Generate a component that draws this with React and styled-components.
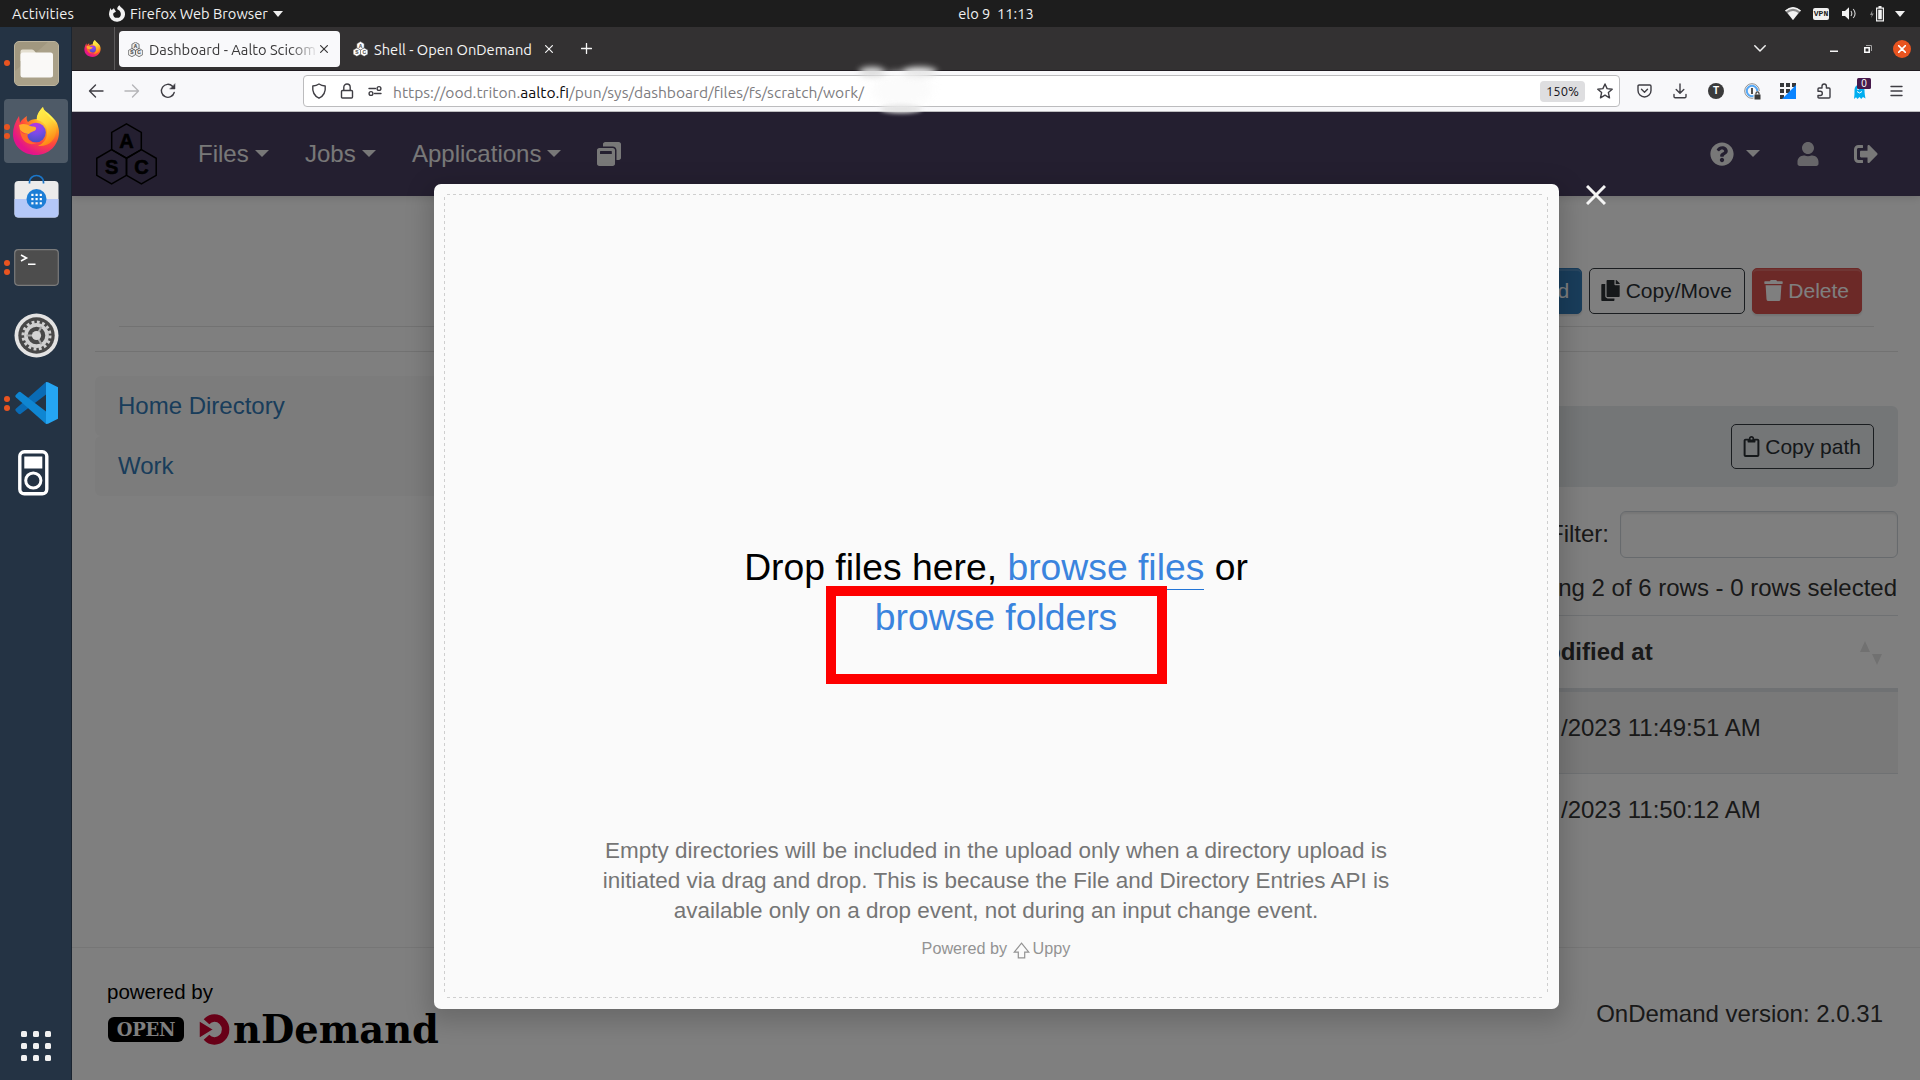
import React from 'react';
import styled, { createGlobalStyle, css } from 'styled-components';
import {
  FaWindowRestore, FaQuestionCircle, FaUser, FaSignOutAlt, FaCopy, FaTrash, FaRegClipboard,
} from 'react-icons/fa';

const GlobalStyle = createGlobalStyle`
  *, *::before, *::after { box-sizing: border-box; }
  html, body { margin: 0; padding: 0; }
  body { width: 1920px; height: 1080px; overflow: hidden; background: #808080; }
  svg { display: block; flex: none; }
`;

const ui = '"Ubuntu", "Noto Sans", sans-serif';
const sans = '"Liberation Sans", Arial, sans-serif';

/* ---------- desktop shell ---------- */

const Screen = styled.div`
  width: 1920px;
  height: 1080px;
  display: flex;
  flex-direction: column;
  overflow: hidden;
  font-family: ${ui};
`;

const TopBar = styled.header`
  height: 27px;
  flex: none;
  display: grid;
  grid-template-columns: 1fr auto 1fr;
  align-items: center;
  padding-left: 72px;
  background: #1d1d1d;
  color: #f0f0f0;
  font-size: 14.67px;
  line-height: 26px;
  white-space: pre;
`;

const TopLeft = styled.div`
  display: flex;
  align-items: center;
  margin-left: -72px;
  padding-left: 12px;
`;

const Activities = styled.span`
  width: 97px;
  letter-spacing: 0.2px;
`;

const AppMenu = styled.span`
  display: flex;
  align-items: center;
  gap: 5px;
`;

const TopRight = styled.div`
  display: flex;
  justify-content: flex-end;
  align-items: center;
  padding-right: 11px;
`;

const Slot = styled.span`
  width: ${(p) => p.$w}px;
  flex: none;
  display: flex;
  align-items: center;
  justify-content: center;
  margin-right: ${(p) => p.$mr || 0}px;
`;

const VpnBadge = styled.span`
  width: 16px;
  height: 12px;
  border-radius: 2px;
  background: #f0f0f0;
  color: #1d1d1d;
  font: bold 8px/12px "Liberation Mono", monospace;
  letter-spacing: 0;
  text-align: center;
`;

const Body = styled.div`
  flex: 1;
  display: flex;
  min-height: 0;
`;

const Dock = styled.nav`
  width: 72px;
  flex: none;
  display: flex;
  flex-direction: column;
  gap: 4px;
  padding: 4px 4px 0;
  background: #243344;
  border-right: 1px solid #1a2430;
`;

const DockItem = styled.div`
  height: 64px;
  width: 64px;
  flex: none;
  display: flex;
  align-items: center;
  border-radius: 4px;
  background: ${(p) => (p.$active ? '#4e5a67' : 'transparent')};
`;

const Dots = styled.div`
  width: 6px;
  margin-right: 3px;
  flex: none;
  display: flex;
  flex-direction: column;
  gap: 3px;
`;

const Dot = styled.i`
  width: 6px;
  height: 6px;
  border-radius: 3px;
  background: #e95420;
`;

const DockArt = styled.div`
  width: 46px;
  height: 48px;
  display: flex;
  align-items: center;
  justify-content: center;
`;

const AppGrid = styled.div`
  margin: auto 0 19px 17px;
  display: grid;
  grid-template-columns: repeat(3, 6px);
  gap: 6px;
`;

const GridDot = styled.i`
  height: 6px;
  border-radius: 1.5px;
  background: #f2f2f2;
`;

/* ---------- browser chrome ---------- */

const Browser = styled.main`
  flex: 1;
  min-width: 0;
  display: flex;
  flex-direction: column;
  position: relative;
`;

const TabStrip = styled.div`
  height: 44px;
  flex: none;
  display: flex;
  background: #333132;
  border-bottom: 1px solid #1f1b20;
`;

const PinnedTab = styled.div`
  width: 43px;
  padding: 13px 0 0 12px;
  border-right: 1px solid #5c5a5b;
`;

const Tab = styled.div`
  width: 221px;
  height: 36px;
  flex: none;
  display: flex;
  align-items: center;
  margin: 4px 0 0 4px;
  padding: 0 12px 0 9px;
  border-radius: 4px;
  font-size: 14.67px;
  line-height: 36px;
  white-space: nowrap;
  ${(p) => (p.$active
    ? css`background: #f9f9fb; color: #3a393a;`
    : css`background: transparent; color: #f5f5f5;`)}
`;

const TabTitle = styled.span`
  flex: 1;
  margin: 1px 4px 0 6px;
  overflow: hidden;
  ${(p) => p.$fade && 'mask-image: linear-gradient(90deg, #000 84%, rgba(0,0,0,.1) 100%);'}
`;

const NewTab = styled.div`
  display: flex;
  align-items: center;
  margin-left: 16px;
  padding-bottom: 1px;
`;

const WindowControls = styled.div`
  margin-left: auto;
  display: flex;
  align-items: center;
  padding: 0 1px 0 0;
`;

const CloseButton = styled.span`
  width: 18px;
  height: 18px;
  border-radius: 9px;
  background: #e95420;
  display: flex;
  align-items: center;
  justify-content: center;
`;

const Toolbar = styled.div`
  height: 41px;
  flex: none;
  display: flex;
  align-items: center;
  background: #f8f8fa;
  border-bottom: 1px solid #bdbdbf;
`;

const NavButtons = styled.div`
  width: 231px;
  padding-left: 16px;
  display: flex;
  gap: 20px;
`;

const UrlBar = styled.div`
  width: 1317px;
  height: 32px;
  display: flex;
  align-items: center;
  padding-left: 7px;
  border: 1px solid #bcbcbe;
  border-radius: 4px;
  background: #fff;
`;

const UrlIcons = styled.div`
  display: flex;
  gap: 12px;
  width: 82px;
`;

const Url = styled.span`
  padding-top: 1px;
  font-size: 15.6px;
  line-height: 20px;
  color: #7d7c80;
  white-space: nowrap;
  b { font-weight: 400; color: #0c0c0d; }
`;

const ZoomBadge = styled.span`
  margin-left: auto;
  width: 45px;
  height: 21px;
  border-radius: 4px;
  background: #dedee0;
  color: #15141a;
  font-size: 13px;
  line-height: 21px;
  text-align: center;
`;

const StarSlot = styled.span`
  margin: 0 6px 0 12px;
`;

const Extensions = styled.div`
  display: flex;
  margin-left: 6px;
`;

const ExtT = styled.span`
  width: 16px;
  height: 16px;
  border-radius: 8px;
  background: #3b3b3b;
  color: #fff;
  font: bold 10px/16px ${sans};
  text-align: center;
`;

const GhostWrap = styled.span`
  position: relative;
  width: 14px;
  height: 16px;
`;

const GhostBadge = styled.span`
  position: absolute;
  left: 4px;
  top: -5px;
  width: 14px;
  height: 11px;
  border-radius: 1.5px;
  background: #471a4c;
  color: #fff;
  font: 10px/11px ${sans};
  text-align: center;
`;

const Smudge = styled.i`
  position: absolute;
  left: ${(p) => p.$x}px;
  top: ${(p) => p.$y}px;
  width: ${(p) => p.$w}px;
  height: ${(p) => p.$h}px;
  border-radius: 50%;
  background: ${(p) => p.$c || '#fbfbfb'};
  filter: blur(${(p) => p.$b || 3}px);
`;

/* ---------- OnDemand page ---------- */

const Viewport = styled.section`
  flex: 1;
  min-height: 0;
  position: relative;
  display: flex;
  flex-direction: column;
  overflow: hidden;
  background: #fff;
  color: #333;
  font: 24px/36px ${sans};
`;

const Navbar = styled.div`
  height: 84px;
  flex: none;
  display: flex;
  align-items: center;
  padding: 0 0 1px 24px;
  background: #483e60;
  box-shadow: 0 1px 9px rgba(0, 0, 0, 0.16);
  color: #f0f0f0;
`;

const NavLogo = styled.div`
  width: 102px;
`;

const NavItem = styled.div`
  display: flex;
  align-items: center;
  width: ${(p) => p.$w}px;
`;

const Caret = styled.i`
  width: 0;
  margin-left: 6px;
  border: 7px solid transparent;
  border-top-color: currentColor;
  border-bottom: 0;
`;

const NavRight = styled.div`
  margin-left: auto;
  display: flex;
  align-items: center;
  padding-right: 42px;
`;

const Content = styled.div`
  flex: 1;
  padding: 0 22px 0 23px;
`;

const ActionBar = styled.div`
  height: 131px;
  margin: 0 24px;
  padding: 72px 12px 0 0;
  display: flex;
  justify-content: flex-end;
  align-items: flex-start;
  gap: 7px;
  border-bottom: 1px solid #e5e5e5;
`;

const Button = styled.span`
  height: ${(p) => p.$h || 46}px;
  display: flex;
  align-items: center;
  gap: 6px;
  padding: 0 12px 1px 11px;
  border: 1px solid #343a40;
  border-radius: 5px;
  font-size: 21px;
  line-height: 31px;
  white-space: nowrap;
  color: #2b3035;
  svg { margin: 0 -${(p) => p.$trim || 0}px; }
  ${(p) => p.$fill && css`
    border-color: ${p.$fill};
    background: ${p.$fill};
    color: #fff;
    box-shadow: inset 0 2px 0 rgba(255, 255, 255, 0.15), 0 2px 2px rgba(0, 0, 0, 0.1);
  `}
`;

const Rule = styled.div`
  margin-top: 24px;
  height: 1px;
  background: #e5e5e5;
`;

const Columns = styled.div`
  display: grid;
  grid-template-columns: 428px 1fr;
  gap: 45px;
  padding-top: 24px;
`;

const Places = styled.div`
  display: flex;
  flex-direction: column;
`;

const Place = styled.a`
  height: 60px;
  padding: 12px 23px;
  border-radius: 6px;
  background: #f8f8f8;
  color: #337ab7;
`;

const Listing = styled.div`
  padding-top: 30px;
`;

const PathBar = styled.div`
  height: 81px;
  display: flex;
  justify-content: flex-end;
  align-items: center;
  padding-right: 24px;
  border-radius: 6px;
  background: #e9ecef;
`;

const FilterRow = styled.div`
  display: flex;
  justify-content: flex-end;
  align-items: center;
  gap: 11px;
  margin-top: 24px;
`;

const FilterLabel = styled.label`
  padding-bottom: 2px;
`;

const FilterBox = styled.span`
  width: 278px;
  height: 47px;
  border: 1px solid #ced4da;
  border-radius: 6px;
  box-shadow: inset 0 2px 2px rgba(0, 0, 0, 0.075);
`;

const Status = styled.div`
  margin-top: 12px;
  height: 45px;
  padding-right: 1px;
  text-align: right;
`;

const Cells = styled.div`
  display: flex;
  padding: 18px 15px 0 0;
  height: ${(p) => (p.$head ? 77 : 81)}px;
  border-top: 1px solid #dee2e6;
  background: ${(p) => (p.$striped ? '#f2f2f2' : 'transparent')};
  ${(p) => p.$head && 'font-weight: 700; border-bottom: 4px solid #dee2e6;'}
  ${(p) => p.$striped && 'border-top: 0; padding-top: 18px;'}
`;

const Cell = styled.span`
  width: 357px;
  margin-left: auto;
  display: flex;
  padding-left: ${(p) => p.$pad}px;
`;

const SortIcon = styled.svg`
  margin: 7px 0 0 auto;
`;

const Footer = styled.footer`
  height: 133px;
  flex: none;
  display: flex;
  justify-content: space-between;
  padding: 32px 37px 0 35px;
  border-top: 1px solid #ededed;
`;

const Brand = styled.div`
  color: #000;
  font-size: 20.5px;
  line-height: 24px;
`;

const BrandRow = styled.div`
  display: flex;
  align-items: center;
  height: 32px;
  margin: 9px 0 0 1px;
`;

const OpenBadge = styled.span`
  width: 76px;
  height: 25px;
  margin-right: 15px;
  border-radius: 6px;
  background: #000;
  color: #fff;
  font: bold 18px/25px "DejaVu Serif", serif;
  letter-spacing: -0.2px;
  text-align: center;
`;

const BrandName = styled.span`
  margin: 1px 0 0 2px;
  font: bold 38.4px/32px "DejaVu Serif", serif;
`;

const Version = styled.div`
  margin-top: 16px;
`;

/* ---------- upload dialog ---------- */

const Backdrop = styled.div`
  position: absolute;
  inset: 0;
  background: rgba(0, 0, 0, 0.5);
`;

const Dialog = styled.div`
  position: absolute;
  left: 362px;
  top: 72px;
  width: 1125px;
  height: 825px;
  padding: 10px 11px 11px 10px;
  border-radius: 7px;
  background: #fafafa;
  box-shadow: 0 7px 23px 6px rgba(0, 0, 0, 0.17);
`;

const dash = (deg) => `repeating-linear-gradient(${deg}deg, #cfcfcf 0 3px, transparent 3px 6px)`;

const DropZone = styled.div`
  height: 100%;
  display: flex;
  flex-direction: column;
  align-items: center;
  padding-top: 348px;
  background:
    ${dash(90)} 3px 0 / calc(100% - 6px) 1px no-repeat,
    ${dash(90)} 3px 100% / calc(100% - 6px) 1px no-repeat,
    ${dash(180)} 0 3px / 1px calc(100% - 6px) no-repeat,
    ${dash(180)} 100% 3px / 1px calc(100% - 6px) no-repeat;
  text-align: center;
`;

const DropTitle = styled.div`
  width: 560px;
  color: #000;
  font-size: 37.3px;
  line-height: 50px;
`;

const Browse = styled.a`
  color: #3a84de;
  ${(p) => p.$underlined && 'display: inline-block; height: 48px; border-bottom: 1px solid #2275d7;'}
`;

const Note = styled.p`
  width: 800px;
  margin: 194px 0 0;
  color: #757575;
  font-size: 22.47px;
  line-height: 30px;
`;

const Powered = styled.div`
  display: flex;
  align-items: center;
  margin-top: 12px;
  color: #939393;
  font-size: 16.2px;
  line-height: 21px;
  white-space: pre;
`;

const UppyArrow = styled.svg`
  margin: 3px 3px 0 1px;
`;

const DialogClose = styled.div`
  position: absolute;
  left: 1514px;
  top: 73px;
`;

const Highlight = styled.div`
  position: absolute;
  left: 754px;
  top: 474px;
  width: 341px;
  height: 98px;
  border: 10px solid #fe0000;
`;

/* ---------- drawings ---------- */

const FirefoxLogo = ({ w = 46, h = 48, id }) => (
  <svg width={w} height={h} viewBox="0 0 46 48">
    <defs>
      <radialGradient id={`${id}a`} cx="0.8" cy="0.14" r="1">
        <stop offset="0.1" stopColor="#fff44f" />
        <stop offset="0.38" stopColor="#ff9a1c" />
        <stop offset="0.62" stopColor="#ff4a3a" />
        <stop offset="0.9" stopColor="#e3148a" />
      </radialGradient>
      <radialGradient id={`${id}b`} cx="0.5" cy="0.1" r="0.9">
        <stop offset="0" stopColor="#b833e1" />
        <stop offset="0.5" stopColor="#7a4be8" />
        <stop offset="1" stopColor="#4a4fc4" />
      </radialGradient>
      <linearGradient id={`${id}c`} x1="0" y1="0" x2="0.3" y2="1">
        <stop offset="0" stopColor="#fff44f" />
        <stop offset="0.5" stopColor="#ffd93a" />
        <stop offset="1" stopColor="#ff8a16" />
      </linearGradient>
    </defs>
    <path d="M44 16C42 12 38 9 35 6C32 4 30 2 30 0C26 4 24 8 24 12C20 12 17 13 15 15C14 14 13 12 14 9C11 11 8 13 7 16L6 9C2 15 0 21 0 27C0 39 10 48 23 48C36 48 46 38 46 25C46 22 45 19 44 16Z" fill={`url(#${id}a)`} />
    <path d="M30 0C26 4 23 9 24 13C30 14 35 19 34 26C34 32 30 37 25 39C36 40 44 32 43 22C43 12 31 8 30 0Z" fill={`url(#${id}c)`} />
    <circle cx="23" cy="25.5" r="9.8" fill={`url(#${id}b)`} />
    <path d="M6 18C10 16 14 17 17 19C20 20 24 19 23 22C22 25 18 24 16 27C14 27 10 26 7 23Z" fill="#ffab2b" />
    <path d="M7 22C8 27 12 27 15 27C13 31 17 36 24 36C15 40 7 33 7 22Z" fill="#ff6a2c" />
  </svg>
);

const hex = (cx, cy, r) => {
  const k = r * 0.866;
  return `M${cx} ${cy - r}L${cx + k} ${cy - r / 2}V${cy + r / 2}L${cx} ${cy + r}L${cx - k} ${cy + r / 2}V${cy - r / 2}Z`;
};

const AscLogo = ({ w, h, fill = 'none', stroke = '#000', sw = 1.5 }) => (
  <svg width={w} height={h} viewBox="0 0 61 62">
    {[[30.5, 18, 'A'], [15.6, 43.8, 'S'], [45.4, 43.8, 'C']].map(([x, y, t]) => (
      <g key={t}>
        <path d={hex(x, y, 17.1)} fill={fill} stroke={stroke} strokeWidth={sw} />
        <text x={x} y={y + 7.2} fontSize="20" fontWeight="700" fontFamily="Liberation Sans, Arial, sans-serif" textAnchor="middle" fill={stroke} stroke={stroke} strokeWidth="0.6">{t}</text>
      </g>
    ))}
  </svg>
);

const Line = ({ w, h = w, vb = `0 0 ${w} ${h}`, c = '#3f3e44', sw = 1.4, children }) => (
  <svg width={w} height={h} viewBox={vb} fill="none" stroke={c} strokeWidth={sw} strokeLinecap="round" strokeLinejoin="round">
    {children}
  </svg>
);

const Cross = ({ s = 8, c, sw = 1.2 }) => (
  <Line w={s} c={c} sw={sw}><path d={`M.6 .6L${s - 0.6} ${s - 0.6}M${s - 0.6} .6L.6 ${s - 0.6}`} /></Line>
);

const Triangle = () => (
  <svg width="10" height="6" viewBox="0 0 10 6"><path d="M0 0H10L5 6Z" fill="#f0f0f0" /></svg>
);

const FilesArt = () => (
  <svg width="45" height="45" viewBox="0 0 45 45">
    <rect x="0.5" y="0.5" width="44" height="44" rx="4.5" fill="#a0977f" stroke="#bdb59f" />
    <path d="M1 30L34 1H40Q44 1 44 5V40Q44 44 40 44H5Q1 44 1 40Z" fill="#aaa189" />
    <path d="M6.5 12V10.5Q6.5 8.5 8.5 8.5H18Q19.5 8.5 20.5 10L22 12V20H6.5Z" fill="#e4dfd0" />
    <rect x="6.5" y="11.5" width="32.5" height="25" rx="2.5" fill="#faf9f7" />
  </svg>
);

const RaisedSvg = styled.svg`
  margin-top: -6px;
`;

const SoftwareArt = () => (
  <RaisedSvg width="45" height="48" viewBox="0 0 45 48">
    <rect x="0.5" y="9" width="44" height="36.5" rx="4" fill="#ebebeb" />
    <path d="M.5 27H44.5V41.5Q44.5 45.5 40.5 45.5H4.5Q.5 45.5 .5 41.5Z" fill="#b4c8f8" />
    <path d="M15.5 11.5V10A7 6.5 0 0 1 29.5 10V11.5" fill="none" stroke="#1b76c8" strokeWidth="1.7" />
    <circle cx="22.5" cy="27" r="10" fill="#1c7ed6" />
    {[0, 1, 2].map((r) => [0, 1, 2].map((c) => (
      <rect key={`${r}${c}`} x={17.3 + c * 4.2} y={21.8 + r * 4.2} width="2.2" height="2.2" fill="#fff" />
    )))}
  </RaisedSvg>
);

const TerminalArt = () => (
  <svg width="45" height="37" viewBox="0 0 45 37">
    <rect x="0.7" y="0.7" width="43.6" height="35.6" rx="3.5" fill="#4d4d4d" stroke="#7b7b7b" strokeWidth="1.2" />
    <path d="M7 6L12.5 9L7 12M14 15.2H21.5" fill="none" stroke="#fff" strokeWidth="1.6" />
  </svg>
);

const SettingsArt = () => (
  <svg width="45" height="45" viewBox="0 0 45 45">
    <circle cx="22.5" cy="22.5" r="22" fill="#e3e3e3" />
    <circle cx="22.5" cy="22.5" r="18.2" fill="#484848" />
    <circle cx="22.5" cy="22.5" r="10.6" fill="none" stroke="#d0d0d0" strokeWidth="3.6" />
    <circle cx="22.5" cy="22.5" r="13.5" fill="none" stroke="#d0d0d0" strokeWidth="3" strokeDasharray="2.8 2.5" />
    <path d="M22.5 22.5L12.5 22.5M22.5 22.5L27.5 13.8M22.5 22.5L27.5 31.2" stroke="#a9a9a9" strokeWidth="2" />
    <circle cx="22.5" cy="22.5" r="4.6" fill="#d4d4d4" />
  </svg>
);

const CodeArt = () => (
  <svg width="43" height="42" viewBox="0 0 43 42">
    <path d="M31 0V12.5L5.5 32Q4.5 32.5 3.5 31.7L.8 29Q-.2 27.8 .8 26.7Z" fill="#0a6bb5" />
    <path d="M31 42V29.5L5.5 10Q4.5 9.5 3.5 10.3L.8 13Q-.2 14.2 .8 15.3Z" fill="#0f86d2" />
    <path d="M31 0L33 0.3L43 5.2V36.8L33 41.7L31 42Z" fill="#25a5f2" />
  </svg>
);

const PlayerSvg = styled.svg`
  margin: 3px 6px 0 0;
`;

const PlayerArt = () => (
  <PlayerSvg width="31" height="46" viewBox="0 0 31 46">
    <rect x="1.8" y="1.8" width="27" height="42" rx="4.5" fill="none" stroke="#fff" strokeWidth="3.4" />
    <rect x="6.3" y="6.5" width="18" height="12" fill="#fff" />
    <circle cx="15.3" cy="30.5" r="7.6" fill="none" stroke="#fff" strokeWidth="3" />
  </PlayerSvg>
);

const apps = [
  { id: 'files', dots: 1, art: <FilesArt /> },
  { id: 'firefox', dots: 2, active: true, art: <FirefoxLogo id="dock" /> },
  { id: 'software', dots: 0, art: <SoftwareArt /> },
  { id: 'terminal', dots: 2, art: <TerminalArt /> },
  { id: 'settings', dots: 0, art: <SettingsArt /> },
  { id: 'code', dots: 2, art: <CodeArt /> },
  { id: 'player', dots: 0, art: <PlayerArt /> },
];

/* ---------- sections ---------- */

const DesktopBar = () => (
  <TopBar>
    <TopLeft>
      <Activities>Activities</Activities>
      <AppMenu>
        <svg width="16" height="17" viewBox="0 0 46 48">
          <path d="M44 16C40 8 32 6 30 0C25 4 23 8 24 12C28 14 34 18 34 25A11 11 0 0 1 12 26C12 22 16 22 20 19L14 9L7 15L5 8C2 14 0 21 0 27A23 22 0 0 0 46 25Q46 20 44 16Z" fill="#f2f2f2" />
        </svg>
        Firefox Web Browser
        <Triangle />
      </AppMenu>
    </TopLeft>
    <span>elo 9  11:13</span>
    <TopRight>
      <Slot $w={28}>
        <svg width="16" height="13" viewBox="0 0 16 13">
          <path d="M0 3.5Q8 -3.5 16 3.5L8 13Z" fill="#8a8a8a" />
          <path d="M0 3.5Q8 -3.5 16 3.5L15 4.6Q8 -1 1 4.6Z" fill="#f2f2f2" />
          <path d="M2.6 6Q8 2 13.4 6L8 13Z" fill="#f2f2f2" />
        </svg>
      </Slot>
      <Slot $w={28}><VpnBadge>VPN</VpnBadge></Slot>
      <Slot $w={28}>
        <svg width="15" height="13" viewBox="0 0 15 13">
          <path d="M0 4H3L7 .3V12.7L3 9H0Z" fill="#f2f2f2" />
          <path d="M9 4Q10.6 6.5 9 9M11.2 2Q15 6.5 11.2 11" fill="none" stroke="#d0d0d0" strokeWidth="1.1" />
        </svg>
      </Slot>
      <Slot $w={28}>
        <svg width="16" height="16" viewBox="0 0 16 16">
          <path d="M3.5 4L1 9H2.8L2 12L4.8 7.5H3Z" fill="#8d8d8d" />
          <path d="M9.5 0H12.5V1.5H15V15.5H7V1.5H9.5Z" fill="#f2f2f2" />
          <path d="M8.2 2.7H13.8V14.3H8.2Z" fill="#1d1d1d" />
          <path d="M9.2 3.7H12.8V13.3H9.2Z" fill="#f2f2f2" />
        </svg>
      </Slot>
      <Slot $w={18}><Triangle /></Slot>
    </TopRight>
  </TopBar>
);

const Tabs = () => (
  <TabStrip>
    <PinnedTab><FirefoxLogo id="pin" w={17} h={17} /></PinnedTab>
    <Tab $active>
      <AscLogo w={15} h={15} fill="#ededed" stroke="#4c4c4c" sw={3} />
      <TabTitle $fade>Dashboard - Aalto Scicomp</TabTitle>
      <Cross c="#3a393a" />
    </Tab>
    <Tab>
      <AscLogo w={15} h={16} fill="#fff" stroke="#555" sw={2} />
      <TabTitle>Shell - Open OnDemand</TabTitle>
      <Cross c="#f5f5f5" />
    </Tab>
    <NewTab><Line w={11} c="#f5f5f5" sw={1.3}><path d="M5.5 .5V10.5M.5 5.5H10.5" /></Line></NewTab>
    <WindowControls>
      <Slot $w={34} $mr={40}><Line w={12} h={7} c="#f0f0f0" sw={1.5}><path d="M.8 .8L6 6L11.2 .8" /></Line></Slot>
      <Slot $w={34}><svg width="8" height="9" viewBox="0 0 8 9"><path d="M0 6.5H8V8H0Z" fill="#f5f5f5" /></svg></Slot>
      <Slot $w={34}>
        <svg width="8" height="8" viewBox="0 0 8 8" fill="none">
          <path d="M2 .5H7.5V6" stroke="#a3a2a2" />
          <path d="M.8 2.8H5.2V7.2H.8Z" stroke="#fff" strokeWidth="1.5" />
        </svg>
      </Slot>
      <Slot $w={34}><CloseButton><Cross c="#fff" sw={1.5} /></CloseButton></Slot>
    </WindowControls>
  </TabStrip>
);

const AddressBar = () => (
  <Toolbar>
    <NavButtons>
      <Line w={16}><path d="M15 8H1.5M7.5 2L1.5 8L7.5 14" /></Line>
      <Line w={16} c="#b5b5b8"><path d="M1 8H14.5M8.5 2L14.5 8L8.5 14" /></Line>
      <Line w={16}>
        <path d="M14.2 9.5A6.5 6.5 0 1 1 12.5 3.2" />
        <path d="M15 1V6H10Z" fill="#3f3e44" strokeWidth="0.5" />
      </Line>
    </NavButtons>
    <UrlBar>
      <UrlIcons>
        <Line w={16}><path d="M8 1C10 2.3 12 2.8 14.2 3C14.8 8.5 12.5 13 8 15.2C3.5 13 1.2 8.5 1.8 3C4 2.8 6 2.3 8 1Z" /></Line>
        <Line w={16}><path d="M3.5 7.5H12.5Q13.5 7.5 13.5 8.5V14Q13.5 15 12.5 15H3.5Q2.5 15 2.5 14V8.5Q2.5 7.5 3.5 7.5ZM4.8 7.5V4.2A3.2 3.2 0 0 1 11.2 4.2V7.5" /></Line>
        <Line w={16}><path d="M2 5.5H8.5M7.5 10.5H14" /><circle cx="12" cy="5.5" r="1.9" /><circle cx="4" cy="10.5" r="1.9" /></Line>
      </UrlIcons>
      <Url>https://ood.triton.<b>aalto.fi</b>/pun/sys/dashboard/files/fs/scratch/work/</Url>
      <ZoomBadge>150%</ZoomBadge>
      <StarSlot><Line w={16}><path d="M8 1L10.1 5.6L15.2 6.2L11.4 9.6L12.5 14.8L8 12.2L3.5 14.8L4.6 9.6L.8 6.2L5.9 5.6Z" /></Line></StarSlot>
    </UrlBar>
    <Extensions>
      <Slot $w={36}><Line w={15} h={14}><path d="M2.2 1H12.8Q14 1 14 2.2V6.5A6.5 6.5 0 0 1 1 6.5V2.2Q1 1 2.2 1ZM4.5 5.2L7.5 8.2L10.5 5.2" /></Line></Slot>
      <Slot $w={36}><Line w={14} h={16}><path d="M7 1V10M3.2 6.5L7 10.2L10.8 6.5M1 11.5V13.5Q1 14.7 2.2 14.7H11.8Q13 14.7 13 13.5V11.5" /></Line></Slot>
      <Slot $w={36}><ExtT>T</ExtT></Slot>
      <Slot $w={36}>
        <svg width="17" height="17" viewBox="0 0 17 17" fill="none">
          <circle cx="8" cy="8" r="7.3" stroke="#8f8f8f" strokeWidth="1" />
          <circle cx="8" cy="8" r="5.2" stroke="#56a8f5" strokeWidth="2" />
          <path d="M8 5V11" stroke="#3b3b3b" strokeWidth="1.8" />
          <rect x="9.5" y="8" width="7.5" height="9" fill="#f8f8fa" />
          <path d="M10.5 11.5H16.5V16.5H10.5Z" fill="#3b3b3b" />
          <path d="M12 11.5V10.3A1.5 1.5 0 0 1 15 10.3V11.5" stroke="#3b3b3b" strokeWidth="1.2" />
        </svg>
      </Slot>
      <Slot $w={36}>
        <svg width="16" height="16" viewBox="0 0 16 16">
          {[0, 6, 12].map((y) => [0, 6, 12].map((x) => (
            <rect key={`${x}-${y}`} x={x} y={y} width="4" height="4" fill="#36383b" />
          )))}
          <path d="M16 2V16H2Z" fill="#0a84ff" />
        </svg>
      </Slot>
      <Slot $w={36}>
        <Line w={15} h={16}><path d="M2 5H5V3.2A2.2 2.2 0 0 1 9.4 3.2V5H12Q13 5 13 6V14Q13 15 12 15H2Q1 15 1 14V12.5H3.2A2.1 2.1 0 0 0 3.2 8.3H1V6Q1 5 2 5Z" /></Line>
      </Slot>
      <Slot $w={36}>
        <GhostWrap>
          <svg width="13" height="16" viewBox="0 0 13 16">
            <path d="M1 16C1.5 13 1.5 10 1.5 7A5 5.5 0 0 1 11.5 7C11.5 10 12 13 12.5 15.5L10 14L8.2 16L6.5 14L4.5 16L3 14.2Z" fill="#00aef0" />
            <path d="M4 8.5Q6.5 11.5 9 8.5" stroke="#fff" fill="none" />
            <circle cx="5" cy="6" r="0.9" fill="#fff" />
          </svg>
          <GhostBadge>0</GhostBadge>
        </GhostWrap>
      </Slot>
      <Slot $w={36}><Line w={13} h={12}><path d="M1 1.5H12M1 6H12M1 10.5H12" /></Line></Slot>
    </Extensions>
  </Toolbar>
);

const Page = () => (
  <Viewport>
    <Navbar>
      <NavLogo><AscLogo w={61} h={62} /></NavLogo>
      <NavItem $w={107}>Files<Caret /></NavItem>
      <NavItem $w={107}>Jobs<Caret /></NavItem>
      <NavItem $w={185}>Applications<Caret /></NavItem>
      <FaWindowRestore size={24} />
      <NavRight>
        <NavItem $w={86}><FaQuestionCircle size={24} /><Slot $w={6} /><Caret /></NavItem>
        <NavItem $w={58}><FaUser size={24} opacity="0.8" /></NavItem>
        <FaSignOutAlt size={24} />
      </NavRight>
    </Navbar>
    <Content>
      <ActionBar>
        <Button $fill="#337ab7">Download</Button>
        <Button $trim={1.3}><FaCopy size={21} />Copy/Move</Button>
        <Button $trim={1.3} $fill="#d9534f"><FaTrash size={21} />Delete</Button>
      </ActionBar>
      <Rule />
      <Columns>
        <Places>
          <Place>Home Directory</Place>
          <Place>Work</Place>
        </Places>
        <Listing>
          <PathBar><Button $h={45} $trim={2.6}><FaRegClipboard size={21} />Copy path</Button></PathBar>
          <FilterRow><FilterLabel>Filter:</FilterLabel><FilterBox /></FilterRow>
          <Status>Showing 2 of 6 rows - 0 rows selected</Status>
          <Cells $head>
            <Cell $pad={0}>
              Modified at
              <SortIcon width="24" height="26" viewBox="0 0 24 26">
                <path d="M1 11L6 0L11 11Z M13 13H23L18 24Z" fill="#e3e3e3" />
              </SortIcon>
            </Cell>
          </Cells>
          <Cells $striped><Cell $pad={35}>/2023 11:49:51 AM</Cell></Cells>
          <Cells><Cell $pad={35}>/2023 11:50:12 AM</Cell></Cells>
        </Listing>
      </Columns>
    </Content>
    <Footer>
      <Brand>
        powered by
        <BrandRow>
          <OpenBadge>OPEN</OpenBadge>
          <svg width="32" height="31" viewBox="0 0 32 31">
            <path d="M7.5 7.7A11 11.5 0 1 1 7.5 23.3" fill="none" stroke="#d0002e" strokeWidth="7.5" />
            <path d="M0 6.5L15 15.5L0 24.5Z" fill="#d0002e" stroke="#fff" strokeWidth="1.5" />
          </svg>
          <BrandName>nDemand</BrandName>
        </BrandRow>
      </Brand>
      <Version>OnDemand version: 2.0.31</Version>
    </Footer>

    <Backdrop />
    <Dialog>
      <DropZone>
        <DropTitle>
          Drop files here, <Browse $underlined>browse files</Browse> or <Browse>browse folders</Browse>
        </DropTitle>
        <Note>
          Empty directories will be included in the upload only when a directory upload is
          initiated via drag and drop. This is because the File and Directory Entries API is
          available only on a drop event, not during an input change event.
        </Note>
        <Powered>
          {'Powered by '}
          <UppyArrow width="17" height="17" viewBox="0 0 17 17" fill="none" stroke="#939393" strokeWidth="1.2">
            <path d="M8.5 1.2L15.8 10.2H11.7V15.8H5.3V10.2H1.2Z" />
          </UppyArrow>
          Uppy
        </Powered>
      </DropZone>
    </Dialog>
    <DialogClose>
      <svg width="20" height="20" viewBox="0 0 20 20"><path d="M1 1L19 19M19 1L1 19" stroke="#f4f4f4" strokeWidth="3" /></svg>
    </DialogClose>
    <Highlight />
  </Viewport>
);

export default function App() {
  return (
    <Screen>
      <GlobalStyle />
      <DesktopBar />
      <Body>
        <Dock>
          {apps.map((a) => (
            <DockItem key={a.id} $active={a.active}>
              <Dots>{Array.from({ length: a.dots }, (_, i) => <Dot key={i} />)}</Dots>
              <DockArt>{a.art}</DockArt>
            </DockItem>
          ))}
          <AppGrid>{Array.from({ length: 9 }, (_, i) => <GridDot key={i} />)}</AppGrid>
        </Dock>
        <Browser>
          <Tabs />
          <AddressBar />
          <Page />
          <Smudge $x={800} $y={46} $w={60} $h={34} $b={4} />
          <Smudge $x={787} $y={40} $w={26} $h={10} $b={3} $c="#dcdcdc" />
          <Smudge $x={831} $y={40} $w={34} $h={10} $b={3} $c="#e6e6e6" />
          <Smudge $x={808} $y={78} $w={42} $h={8} $b={2} $c="#e2e2e2" />
        </Browser>
      </Body>
    </Screen>
  );
}
